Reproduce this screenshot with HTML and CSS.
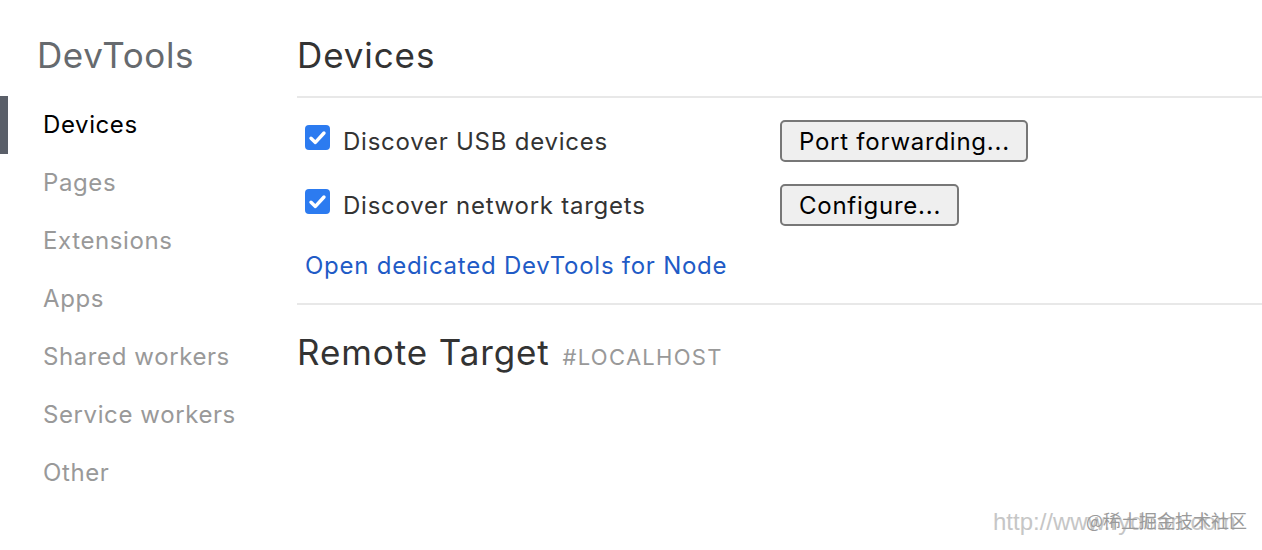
FILE: index.html
```html
<!DOCTYPE html>
<html>
<head>
<meta charset="utf-8">
<link rel="stylesheet" href="styles.css">
</head>
<body>
<div class="page">
  <aside class="sidebar">
    <div class="brand">DevTools</div>
    <nav class="nav">
      <div class="nav-item active">Devices</div>
      <div class="nav-item">Pages</div>
      <div class="nav-item">Extensions</div>
      <div class="nav-item">Apps</div>
      <div class="nav-item">Shared workers</div>
      <div class="nav-item">Service workers</div>
      <div class="nav-item">Other</div>
    </nav>
  </aside>
  <main class="main">
    <h1 class="title">Devices</h1>
    <div class="section">
      <div class="row">
        <label class="check">
          <span class="box"><svg viewBox="0 0 25 25" width="25" height="25"><path d="M6 13.2 L10.4 17.4 L19 8" fill="none" stroke="#fff" stroke-width="3.4" stroke-linecap="round" stroke-linejoin="round"/></svg></span>
          <span class="check-label">Discover USB devices</span>
        </label>
        <button class="btn">Port forwarding...</button>
      </div>
      <div class="row">
        <label class="check">
          <span class="box"><svg viewBox="0 0 25 25" width="25" height="25"><path d="M6 13.2 L10.4 17.4 L19 8" fill="none" stroke="#fff" stroke-width="3.4" stroke-linecap="round" stroke-linejoin="round"/></svg></span>
          <span class="check-label">Discover network targets</span>
        </label>
        <button class="btn">Configure...</button>
      </div>
      <div class="link-row"><a class="link" href="#">Open dedicated DevTools for Node</a></div>
    </div>
    <h2 class="remote">Remote Target <span class="host">#LOCALHOST</span></h2>
  </main>
</div>
<div class="watermark"><span class="wm-url">http://www.rydean.com</span><span class="wm-cn">@稀土掘金技术社区</span></div>
</body>
</html>
```
FILE: styles.css
```css
html, body {
  margin: 0;
  padding: 0;
  background: #fff;
  font-family: Inter, "Liberation Sans", Arial, sans-serif;
}
.page {
  display: flex;
  width: 1262px;
  height: 550px;
}
.sidebar {
  width: 297px;
  flex: none;
}
.brand {
  height: 96px;
  box-sizing: border-box;
  padding-left: 37px;
  padding-top: 14px;
  font-size: 35px;
  letter-spacing: 0.6px;
  color: #666a6e;
  display: flex;
  align-items: center;
}
.nav {
  display: flex;
  flex-direction: column;
}
.nav-item {
  height: 58px;
  line-height: 58px;
  padding-left: 43px;
  font-size: 24px;
  letter-spacing: 0.6px;
  color: #999;
}
.nav-item.active {
  color: #000;
  border-left: 8px solid #5a5f69;
  padding-left: 35px;
}
.main {
  flex: 1;
  display: flex;
  flex-direction: column;
}
.title {
  margin: 0;
  height: 98px;
  box-sizing: border-box;
  padding-top: 14px;
  display: flex;
  align-items: center;
  font-size: 35px;
  letter-spacing: 0.9px;
  font-weight: normal;
  color: #333;
  border-bottom: 2px solid #e8e8e8;
}
.section {
  padding: 11px 0 0 8px;
  height: 207px;
  box-sizing: border-box;
  border-bottom: 2px solid #e8e8e8;
}
.row {
  display: flex;
  align-items: center;
  height: 64px;
}
.check {
  display: flex;
  align-items: center;
  width: 475px;
}
.box {
  width: 25px;
  height: 25px;
  border-radius: 4px;
  background: #2c7bf0;
  display: flex;
  margin-right: 13px;
  margin-top: -8px;
}
.box svg { display: block; }
.check-label {
  font-size: 24px;
  letter-spacing: 0.75px;
  color: #333;
}
.btn {
  font-family: Inter, "Liberation Sans", Arial, sans-serif;
  font-size: 24px;
  letter-spacing: 0.75px;
  color: #000;
  background: #efefef;
  border: 2px solid #777;
  border-radius: 5px;
  height: 42px;
  padding: 0 16px 0 17px;
}
.link-row {
  height: 56px;
  display: flex;
  align-items: center;
}
.link {
  font-size: 24px;
  letter-spacing: 0.75px;
  color: #1f5bc6;
  text-decoration: none;
}
.remote {
  margin: 0;
  padding-top: 26px;
  font-size: 35px;
  letter-spacing: 0.9px;
  font-weight: normal;
  color: #333;
}
.host {
  font-size: 22px;
  letter-spacing: 1.3px;
  color: #999;
  margin-left: 2px;
}
.watermark {
  position: absolute;
  left: 993px;
  top: 508px;
  font-size: 24px;
  font-family: "Liberation Sans", Arial, sans-serif;
  color: #bbb;
}
.wm-url { color: #c6c6c6; }
.wm-cn {
  position: absolute;
  left: 93px;
  top: 3px;
  font-size: 18px;
  color: #9a9a9a;
  font-family: "Noto Sans CJK SC", sans-serif;
  white-space: nowrap;
  line-height: 1;
}
```
